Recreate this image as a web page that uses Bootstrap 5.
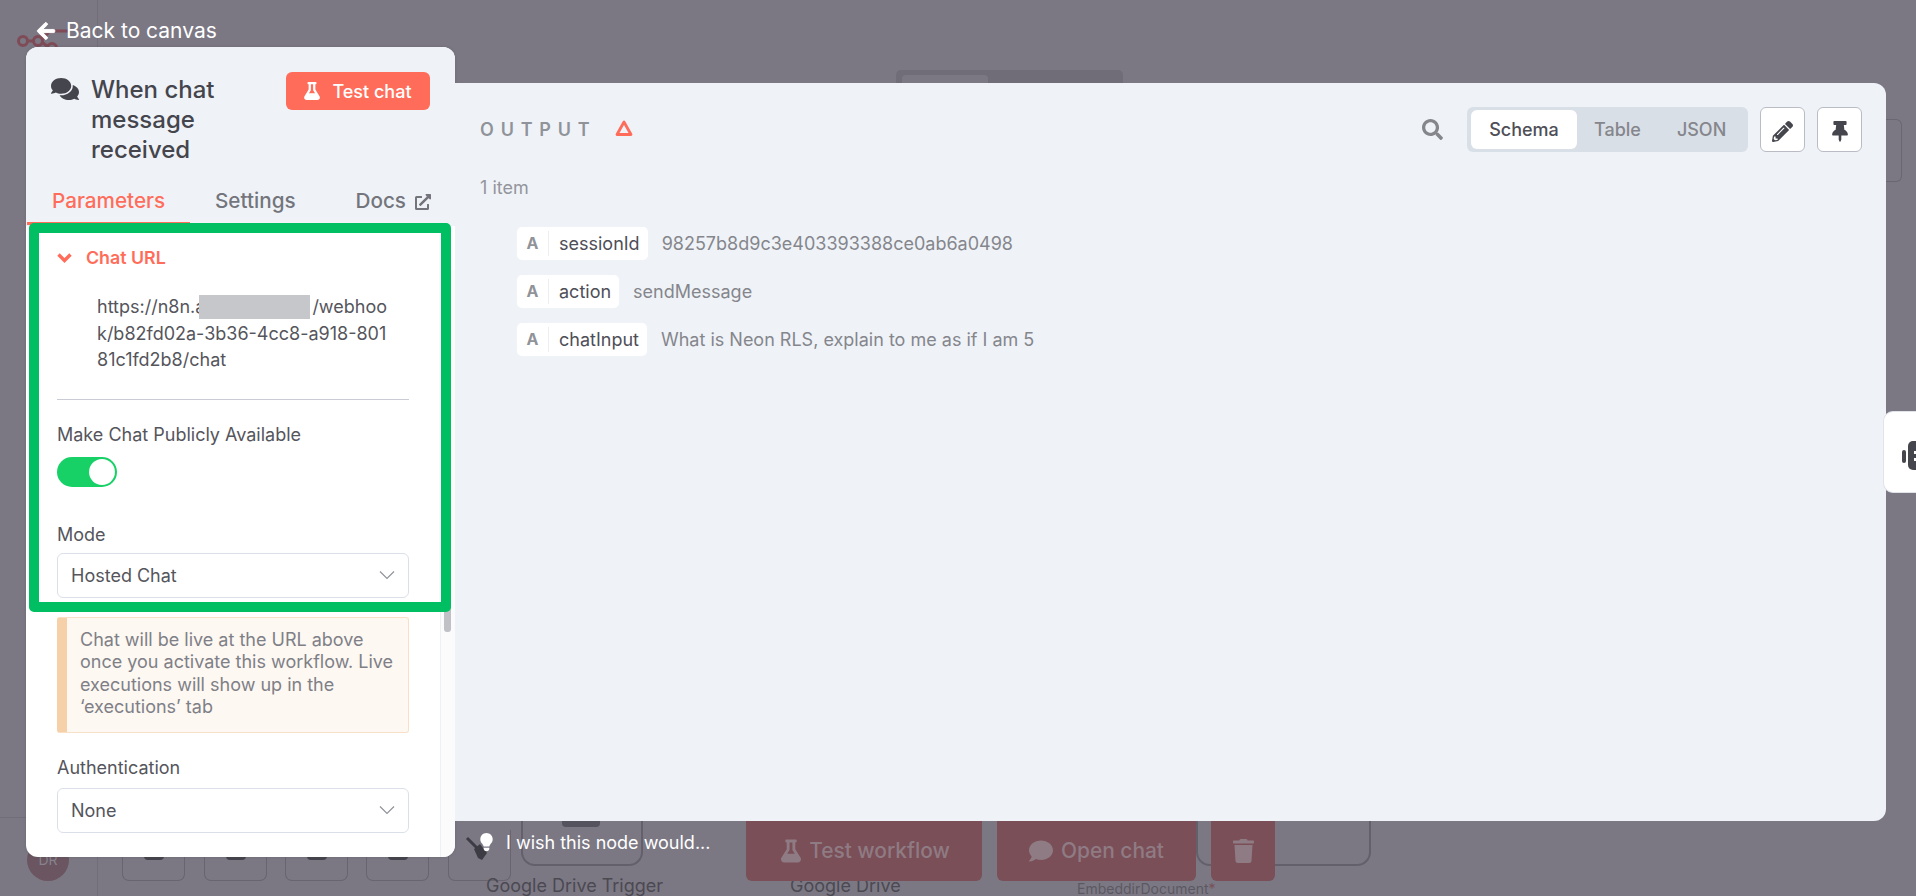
<!DOCTYPE html>
<html lang="en">

<head>
    <meta charset="UTF-8">
    <meta name="viewport" content="width=device-width, initial-scale=1.0">
    <title>When chat message received</title>
    <link href="https://cdn.jsdelivr.net/npm/bootstrap@5.3.0/dist/css/bootstrap.min.css" rel="stylesheet">
    <style>
        html, body { height: 896px; overflow: hidden; }
        body { background: #7b7884; font-family: "Inter", "Liberation Sans", sans-serif; color: #4a4a52; }

        /* canvas behind the dimmed overlay */
        .canvas-bg { position: absolute; inset: 0; overflow: hidden; }
        .side-line { position: absolute; left: 97px; top: 0; bottom: 0; border-left: 1px solid #716e7a; }
        .foot-line { position: absolute; left: 0; width: 97px; top: 817px; border-top: 1px solid #716e7a; }
        .n8n-logo { position: absolute; left: 16px; top: 28px; }
        .top-switch { position: absolute; left: 896px; top: 70px; width: 227px; height: 14px; background: #706d78; border-radius: 5px 5px 0 0; }
        .top-switch div { margin: 5px 0 0 6px; width: 86px; height: 9px; background: #7b7884; border-radius: 4px 4px 0 0; }
        .far-node { position: absolute; left: 1886px; top: 119px; width: 16px; height: 63px; border: 1px solid #6a6772; border-left: 0; border-radius: 0 6px 6px 0; }
        .avatar-dim { position: absolute; left: 27px; top: 839px; width: 42px; height: 42px; border-radius: 50%; background: #6a5560; color: #86838d; font-size: 14px; line-height: 42px; text-align: center; }
        .tool-box { position: absolute; top: 830px; width: 63px; height: 51px; border: 1px solid #686570; border-top: 0; border-radius: 0 0 7px 7px; }
        .tool-mark { position: absolute; left: 21px; bottom: 20px; width: 20px; height: 6px; background: #45434c; border-radius: 0 0 4px 4px; }
        .node-box { position: absolute; border: 2px solid #63606b; border-top: 0; border-radius: 0 0 14px 14px; }
        .node-cut { position: absolute; left: 562px; top: 821px; width: 38px; height: 6px; background: #55535d; border-radius: 0 0 4px 4px; }
        .canvas-label { position: absolute; color: #4b4952; font-size: 18px; line-height: 22px; white-space: nowrap; }
        .canvas-label-sm { color: #5b5862; font-size: 14px; }
        .canvas-label-sm b { color: #7a4f57; font-weight: 400; }

        /* overlay windows */
        .back-link { position: absolute; left: 37px; top: 17px; color: #fff; font-size: 21px; line-height: 28px; text-decoration: none; }
        .back-link span { margin-left: 11px; }
        .back-link svg { stroke: #fff; stroke-width: 24px; overflow: visible; }
        .ndv-wrap { padding: 47px 30px 0 26px; }
        .param-panel { width: 429px; height: 810px; background: #fff; border-radius: 12px; overflow: hidden; position: relative; flex: none; box-shadow: 0 0 3px rgba(60, 60, 70, .25); }
        .param-head { background: #eff3f8; padding: 25px 25px 0 25px; height: 179px; }
        .param-title { font-size: 24px; line-height: 30px; font-weight: 500; color: #45454d; width: 150px; margin: 3px 0 0 12px; }
        .test-btn { background: #ff6d5a; color: #fff; font-size: 18px; font-weight: 500; height: 38px; width: 144px; border: 0; border-radius: 6px; padding: 0; }
        .test-btn:hover { background: #ff6d5a; color: #fff; }
        .test-btn svg { margin-right: 12px; }
        .tab-row { margin: 14px -25px 0; padding: 0 24px 0 1px; height: 46px; }
        .tab-row .nav-link { font-size: 20.7px; line-height: 24px; height: 46px; padding: 10px 0 0; color: #74757c; font-weight: 500; }
        .tab-row .tab-active { width: 163px; padding-left: 25px; border-bottom: 3px solid #ff6d5a; color: #ff6d5a; }
        .tab-row .tab-two { margin-left: 25px; }
        .docs-link svg { margin: 5px 0 0 9px; }

        .green-frame { margin: -3px 4px 0 3px; border: 10px solid #00bf63; border-radius: 5px; background: #fff; padding: 13px 32px 4px 18px; position: relative; z-index: 2; }
        .chat-url { color: #ff6d5a; font-size: 17.8px; font-weight: 600; line-height: 24px; }
        .chat-url svg { margin-right: 14px; }
        .url-text { margin: 24px 0 0 40px; font-size: 18px; line-height: 26.5px; color: #55555c; white-space: nowrap; }
        .redact { display: inline-block; width: 111px; height: 24px; background: #c5c7ca; vertical-align: -6px; margin: 0 2px 0 -6px; }
        .sep-line { margin: 25px 0 23px; border-top: 1px solid #c9ccd6; opacity: 1; }
        .field-label { font-size: 18px; line-height: 24px; color: #55555c; }
        .switch-wrap { margin: 10px 0 0; padding: 0; min-height: 0; height: 30px; }
        .switch-wrap .form-check-input { width: 60px; height: 30px; margin: 0; float: none; display: block; border: 0; background-color: #17d166; background-image: url("data:image/svg+xml,%3csvg xmlns='http://www.w3.org/2000/svg' viewBox='-4 -4 8 8'%3e%3ccircle r='3.45' fill='%23fff'/%3e%3c/svg%3e"); }
        .mode-label { margin-top: 36px; }
        .mode-select { margin-top: 6px; }
        .sel-box { height: 45px; border: 1px solid #dbdfe7; border-radius: 6px; font-size: 18px; color: #55555c; padding: 0 40px 0 13px; box-shadow: none; background-image: url("data:image/svg+xml,%3csvg xmlns='http://www.w3.org/2000/svg' viewBox='0 0 16 10'%3e%3cpath fill='none' stroke='%23909399' stroke-width='1.2' d='M1 1.5l7 7 7-7'/%3e%3c/svg%3e"); background-size: 16px 10px; background-position: right 13px center; }
        .notice-box { margin: 5px 46px 0 31px; height: 116px; background: #fdf8f2; border: 1px solid #f8e0c8; border-left: 10px solid #f6d0a8; border-radius: 3px; padding: 11px 8px 0 13px; font-size: 18px; line-height: 22.6px; color: #7f8087; }
        .lower-form { margin: 23px 46px 0 31px; }
        .scroll-track { position: absolute; right: 0; top: 223px; bottom: 0; width: 15px; border-left: 1px solid #eef0f4; background: #fbfbfc; }
        .scroll-thumb { margin: 335px 0 0 3px; width: 7px; height: 27px; border-radius: 3px; background: #bfc1c6; }

        .right-col { flex: 1 1 auto; min-width: 0; margin-top: 36px; }
        .output-panel { height: 738px; background: #eff3f8; border-radius: 0 12px 12px 0; padding: 24px 24px 0 25px; position: relative; }
        .output-title { font-size: 18px; line-height: 28px; font-weight: 600; letter-spacing: 6.8px; color: #909399; margin-top: 9px; }
        .warn-mark { margin: 12px 0 0 17px; }
        .search-mark { margin-top: 12px; }
        .view-tabs { height: 45px; width: 281px; background: #d9dfe7; border-radius: 6px; padding: 3px 4px; margin-left: 24px; }
        .view-tabs .btn { border: 0; padding: 0; font-size: 18px; font-weight: 500; color: #85868c; height: 39px; }
        .view-tabs .tab-on, .view-tabs .tab-on:hover { background: #fff; color: #4e4e57; width: 106px; border-radius: 6px; }
        .view-tabs .tab-table { margin-left: 17px; }
        .view-tabs .tab-json { margin-left: 36px; }
        .square-btn { width: 45px; height: 45px; padding: 0; background: #fff; border: 1px solid #b9bcc4; border-radius: 6px; margin-left: 12px; }
        .item-count { font-size: 18px; line-height: 24px; color: #94959b; margin-top: 24px; }
        .schema-list { margin: 27px 0 0 37px; gap: 15px; }
        .schema-pill { background: #fff; border-radius: 5px; height: 33px; font-size: 18px; color: #4e4e57; }
        .pill-type { width: 32px; text-align: center; font-weight: 700; color: #909399; border-right: 1px solid #eceef2; line-height: 25px; font-size: 16px; }
        .pill-name { padding: 0 8px 0 10px; }
        .schema-val { font-size: 18px; color: #85868c; margin-left: 14px; }

        .foot-row { height: 60px; padding-left: 10px; }
        .wish-text { color: #fff; font-size: 18px; line-height: 24px; margin: 10px 0 0 11px; width: 240px; }
        .bulb-wrap { width: 30px; margin-top: 12px; height: 38px; }
        .dim-btn { background: #7a4f57; color: #8f7b84; border: 0; border-radius: 0 0 6px 6px; height: 60px; font-size: 20.9px; font-weight: 500; padding: 0; }
        .dim-btn:hover { background: #7a4f57; color: #8f7b84; }
        .dim-test { width: 236px; padding-left: 3px; }
        .dim-chat { width: 199px; margin-left: 15px; }
        .dim-trash { width: 64px; margin-left: 15px; }
        .ask-tab { position: absolute; right: 0; top: 411px; width: 33px; height: 82px; background: #fff; border: 1px solid #dfe3ea; border-right: 0; border-radius: 10px 0 0 10px; overflow: hidden; z-index: 3; }
    </style>
</head>

<body>
    <div class="canvas-bg">
        <div class="side-line"></div>
        <div class="foot-line"></div>
        <svg class="n8n-logo" width="54" height="30" viewBox="0 0 54 30" fill="none" stroke="#7f4b56" stroke-width="3">
            <circle cx="7" cy="13" r="4.5" /><circle cx="22" cy="13" r="4.5" /><circle cx="36" cy="20" r="4.5" />
            <path d="M11 13h7M26 11l8-8h18M26 14l6 5" />
        </svg>
        <div class="top-switch"><div></div></div>
        <div class="far-node"></div>
        <div class="avatar-dim">DR</div>
        <div class="tool-box" style="left:122px"><span class="tool-mark"></span></div>
        <div class="tool-box" style="left:204px"><span class="tool-mark"></span></div>
        <div class="tool-box" style="left:285px"><span class="tool-mark"></span></div>
        <div class="tool-box" style="left:366px"><span class="tool-mark"></span></div>
        <div class="tool-box" style="left:448px"></div>
        <div class="node-box" style="left:521px;top:821px;width:122px;height:45px"></div>
        <div class="node-cut"></div>
        <div class="node-box" style="left:1196px;top:821px;width:175px;height:45px"></div>
        <div class="canvas-label" style="left:486px;top:875px">Google Drive Trigger</div>
        <div class="canvas-label" style="left:790px;top:875px">Google Drive</div>
        <div class="canvas-label canvas-label-sm" style="left:1077px;top:878px">EmbeddirDocument<b>*</b></div>
    </div>

    <a class="back-link d-flex align-items-center" href="#">
        <svg width="18" height="20" viewBox="0 0 448 512" fill="#fff"><path d="M257.5 445.1l-22.2 22.2c-9.4 9.4-24.6 9.4-33.9 0L7 273c-9.4-9.4-9.4-24.6 0-33.9L201.4 44.7c9.4-9.4 24.6-9.4 33.9 0l22.2 22.2c9.5 9.5 9.3 25-.4 34.3L136.6 216H424c13.3 0 24 10.7 24 24v32c0 13.3-10.7 24-24 24H136.6l120.5 114.8c9.8 9.3 10 24.8.4 34.3z" /></svg>
        <span>Back to canvas</span>
    </a>

    <div class="ndv-wrap d-flex position-relative">
        <div class="param-panel">
            <div class="param-head">
                <div class="d-flex align-items-start">
                    <svg width="28" height="26" viewBox="0 0 576 512" fill="#45454d" class="mt-1"><path d="M416 192c0-88.4-93.1-160-208-160S0 103.6 0 192c0 34.3 14.1 65.9 38 92-13.4 30.2-35.5 54.2-35.8 54.5-2.2 2.3-2.8 5.7-1.5 8.7S4.8 352 8 352c36.6 0 66.9-12.3 88.7-25 32.2 15.7 70.3 25 111.3 25 114.9 0 208-71.6 208-160zm122 220c23.9-26 38-57.7 38-92 0-66.9-53.5-124.2-129.3-148.1.9 6.6 1.3 13.3 1.3 20.1 0 105.9-107.7 192-240 192-10.8 0-21.3-.8-31.7-1.9C207.8 439.6 281.8 480 368 480c41 0 79.1-9.2 111.3-25 21.8 12.7 52.1 25 88.7 25 3.2 0 6.1-1.9 7.3-4.8 1.3-2.9.7-6.3-1.5-8.7-.3-.3-22.4-24.2-35.8-54.5z" /></svg>
                    <div class="param-title">When chat message received</div>
                    <button class="btn test-btn ms-auto d-flex align-items-center justify-content-center" type="button">
                        <svg width="16" height="18" viewBox="0 0 448 512" fill="#fff"><path d="M437.2 403.5L320 215V64h8c13.3 0 24-10.7 24-24V24c0-13.3-10.7-24-24-24H120c-13.3 0-24 10.7-24 24v16c0 13.3 10.7 24 24 24h8v151L10.8 403.5C-18.5 450.6 15.3 512 70.9 512h306.2c55.7 0 89.4-61.5 60.1-108.5zM137.9 320l48.2-77.6c3.7-5.2 5.8-11.6 5.8-18.4V64h64v160c0 6.9 2.2 13.2 5.8 18.4l48.2 77.6h-172z" /></svg>
                        Test chat
                    </button>
                </div>
                <div class="nav tab-row d-flex align-items-start">
                    <a class="nav-link tab-active" href="#">Parameters</a>
                    <a class="nav-link tab-two" href="#">Settings</a>
                    <a class="nav-link docs-link ms-auto d-flex align-items-start" href="#">Docs
                        <svg width="16" height="16" viewBox="0 0 512 512" fill="#74757c"><path d="M432,320H400a16,16,0,0,0-16,16V448H64V128H208a16,16,0,0,0,16-16V80a16,16,0,0,0-16-16H48A48,48,0,0,0,0,112V464a48,48,0,0,0,48,48H400a48,48,0,0,0,48-48V336A16,16,0,0,0,432,320ZM488,0h-128c-21.37,0-32.05,25.91-17,41l35.73,35.73L135,320.37a24,24,0,0,0,0,34L157.67,377a24,24,0,0,0,34,0L435.28,133.32,471,169c15,15,41,4.5,41-17V24A24,24,0,0,0,488,0Z" /></svg>
                    </a>
                </div>
            </div>

            <div class="green-frame">
                <div class="chat-url d-flex align-items-center">
                    <svg width="15" height="12" viewBox="0 0 15 12" fill="none" stroke="#ff6d5a" stroke-width="3.4"><path d="M1.5 2.5l6 6 6-6" /></svg>
                    Chat URL
                </div>
                <div class="url-text">https://n8n.a<span class="redact"></span>/webhoo<br>k/b82fd02a-3b36-4cc8-a918-801<br>81c1fd2b8/chat</div>
                <hr class="sep-line">
                <div class="field-label">Make Chat Publicly Available</div>
                <div class="form-check form-switch switch-wrap">
                    <input class="form-check-input" type="checkbox" role="switch" checked aria-label="Make Chat Publicly Available">
                </div>
                <div class="field-label mode-label">Mode</div>
                <select class="form-select sel-box mode-select" aria-label="Mode">
                    <option>Hosted Chat</option>
                </select>
            </div>

            <div class="notice-box">Chat will be live at the URL above once you activate this workflow. Live executions will show up in the ‘executions’ tab</div>

            <div class="lower-form">
                <div class="field-label">Authentication</div>
                <select class="form-select sel-box mt-2" aria-label="Authentication">
                    <option>None</option>
                </select>
            </div>

            <div class="scroll-track"><div class="scroll-thumb"></div></div>
        </div>

        <div class="right-col">
            <div class="output-panel">
                <div class="d-flex align-items-start">
                    <div class="output-title">OUTPUT</div>
                    <svg class="warn-mark" width="20" height="18" viewBox="0 0 20 18" fill="none" stroke="#ff6d5a" stroke-width="2.8" stroke-linejoin="round"><path d="M10 3L3 15.5h14z" /></svg>
                    <svg class="search-mark ms-auto" width="21" height="21" viewBox="0 0 512 512" fill="#85868c"><path d="M505 442.7L405.3 343c-4.5-4.5-10.6-7-17-7H372c27.6-35.3 44-79.7 44-128C416 93.1 322.9 0 208 0S0 93.1 0 208s93.1 208 208 208c48.3 0 92.7-16.4 128-44v16.3c0 6.4 2.5 12.5 7 17l99.7 99.7c9.4 9.4 24.6 9.4 33.9 0l28.3-28.3c9.4-9.4 9.4-24.6.1-34zM208 336c-70.7 0-128-57.2-128-128 0-70.7 57.2-128 128-128 70.7 0 128 57.2 128 128 0 70.7-57.2 128-128 128z" /></svg>
                    <div class="view-tabs d-flex">
                        <button class="btn tab-on" type="button">Schema</button>
                        <button class="btn tab-table" type="button">Table</button>
                        <button class="btn tab-json" type="button">JSON</button>
                    </div>
                    <button class="btn square-btn" type="button" aria-label="Edit">
                        <svg width="21" height="21" viewBox="0 0 512 512" fill="#45454d"><path d="M497.9 142.1l-46.1 46.1c-4.7 4.7-12.3 4.7-17 0l-111-111c-4.7-4.7-4.7-12.3 0-17l46.1-46.1c18.7-18.7 49.1-18.7 67.9 0l60.1 60.1c18.8 18.7 18.8 49.1 0 67.9zM284.2 99.8L21.6 362.4.4 483.9c-2.9 16.4 11.4 30.6 27.8 27.8l121.5-21.3 262.6-262.6c4.7-4.7 4.7-12.3 0-17l-111-111c-4.8-4.7-12.4-4.7-17.1 0zM124.1 339.9c-5.5-5.5-5.5-14.3 0-19.8l154-154c5.5-5.5 14.3-5.5 19.8 0s5.5 14.3 0 19.8l-154 154c-5.5 5.5-14.3 5.5-19.8 0zM88 424h48v36.3l-64.5 11.3-31.1-31.1L51.7 376H88v48z" /></svg>
                    </button>
                    <button class="btn square-btn" type="button" aria-label="Pin">
                        <svg width="16" height="21" viewBox="0 0 384 512" fill="#45454d"><path d="M298.028 214.267L285.793 96H328c13.255 0 24-10.745 24-24V24c0-13.255-10.745-24-24-24H56C42.745 0 32 10.745 32 24v48c0 13.255 10.745 24 24 24h42.207L85.972 214.267C37.465 236.82 0 277.261 0 328c0 13.255 10.745 24 24 24h136v104.007c0 1.242.289 2.467.845 3.578l24 48c2.941 5.882 11.364 5.893 14.311 0l24-48a8.008 8.008 0 0 0 .845-3.578V352h136c13.255 0 24-10.745 24-24-.001-51.183-37.983-91.42-85.973-113.733z" /></svg>
                    </button>
                </div>
                <div class="item-count">1 item</div>
                <div class="schema-list d-flex flex-column">
                    <div class="d-flex align-items-center">
                        <div class="schema-pill d-flex align-items-center"><span class="pill-type">A</span><span class="pill-name">sessionId</span></div>
                        <span class="schema-val">98257b8d9c3e403393388ce0ab6a0498</span>
                    </div>
                    <div class="d-flex align-items-center">
                        <div class="schema-pill d-flex align-items-center"><span class="pill-type">A</span><span class="pill-name">action</span></div>
                        <span class="schema-val">sendMessage</span>
                    </div>
                    <div class="d-flex align-items-center">
                        <div class="schema-pill d-flex align-items-center"><span class="pill-type">A</span><span class="pill-name">chatInput</span></div>
                        <span class="schema-val">What is Neon RLS, explain to me as if I am 5</span>
                    </div>
                </div>
            </div>

            <div class="foot-row d-flex align-items-start">
                <div class="bulb-wrap">
                    <svg width="30" height="38" viewBox="0 0 30 38">
                        <path d="M2 5l10 10" stroke="#3d3b44" stroke-width="3" />
                        <path d="M9 16l6-5 7 9-5 7-4-2z" fill="#3d3b44" />
                        <svg x="15" y="0" width="13" height="18" viewBox="0 0 352 512" fill="#fff"><path d="M96.06 454.35c.01 6.29 1.87 12.45 5.36 17.69l17.09 25.69a31.99 31.99 0 0 0 26.64 14.28h61.71a31.99 31.99 0 0 0 26.64-14.28l17.09-25.69a31.989 31.989 0 0 0 5.36-17.69l.04-38.35H96.01l.05 38.35zM0 176c0 44.37 16.45 84.85 43.56 115.78 16.52 18.85 42.36 58.23 52.21 91.45.04.26.07.52.11.78h160.24c.04-.26.07-.51.11-.78 9.85-33.22 35.69-72.6 52.21-91.45C335.55 260.85 352 220.37 352 176 352 78.61 272.91-.3 175.45 0 73.44.31 0 82.97 0 176z" /></svg>
                    </svg>
                </div>
                <div class="wish-text">I wish this node would...</div>
                <button class="btn dim-btn dim-test d-flex align-items-center justify-content-center" type="button">
                    <svg width="20" height="24" viewBox="0 0 448 512" fill="#8f7b84" class="me-2"><path d="M437.2 403.5L320 215V64h8c13.3 0 24-10.7 24-24V24c0-13.3-10.7-24-24-24H120c-13.3 0-24 10.7-24 24v16c0 13.3 10.7 24 24 24h8v151L10.8 403.5C-18.5 450.6 15.3 512 70.9 512h306.2c55.7 0 89.4-61.5 60.1-108.5zM137.9 320l48.2-77.6c3.7-5.2 5.8-11.6 5.8-18.4V64h64v160c0 6.9 2.2 13.2 5.8 18.4l48.2 77.6h-172z" /></svg>
                    Test workflow
                </button>
                <button class="btn dim-btn dim-chat d-flex align-items-center justify-content-center" type="button">
                    <svg width="24" height="24" viewBox="0 0 512 512" fill="#8f7b84" class="me-2"><path d="M256 32C114.6 32 0 125.1 0 240c0 49.6 21.4 95 57 130.7C44.5 421.1 2.7 466 2.2 466.5c-2.2 2.3-2.8 5.7-1.5 8.7S4.8 480 8 480c66.3 0 116-31.8 140.6-51.4 32.7 12.3 69 19.4 107.4 19.4 141.4 0 256-93.1 256-208S397.4 32 256 32z" /></svg>
                    Open chat
                </button>
                <button class="btn dim-btn dim-trash d-flex align-items-center justify-content-center" type="button" aria-label="Delete">
                    <svg width="21" height="24" viewBox="0 0 448 512" fill="#8f7b84"><path d="M432 32H312l-9.4-18.7A24 24 0 0 0 281.1 0H166.8a23.72 23.72 0 0 0-21.4 13.3L136 32H16A16 16 0 0 0 0 48v32a16 16 0 0 0 16 16h416a16 16 0 0 0 16-16V48a16 16 0 0 0-16-16zM53.2 467a48 48 0 0 0 47.9 45h245.8a48 48 0 0 0 47.9-45L416 128H32z" /></svg>
                </button>
            </div>
        </div>
    </div>

    <div class="ask-tab">
        <svg width="33" height="82" viewBox="0 0 33 82" fill="#45454d">
            <rect x="18" y="38" width="4" height="13" rx="2" />
            <rect x="24" y="29" width="14" height="29" rx="5" />
            <rect x="30" y="39" width="3" height="3" fill="#fff" />
            <rect x="30" y="46" width="3" height="3" fill="#fff" />
        </svg>
    </div>

    <script src="https://cdn.jsdelivr.net/npm/bootstrap@5.3.0/dist/js/bootstrap.bundle.min.js"></script>
</body>

</html>
